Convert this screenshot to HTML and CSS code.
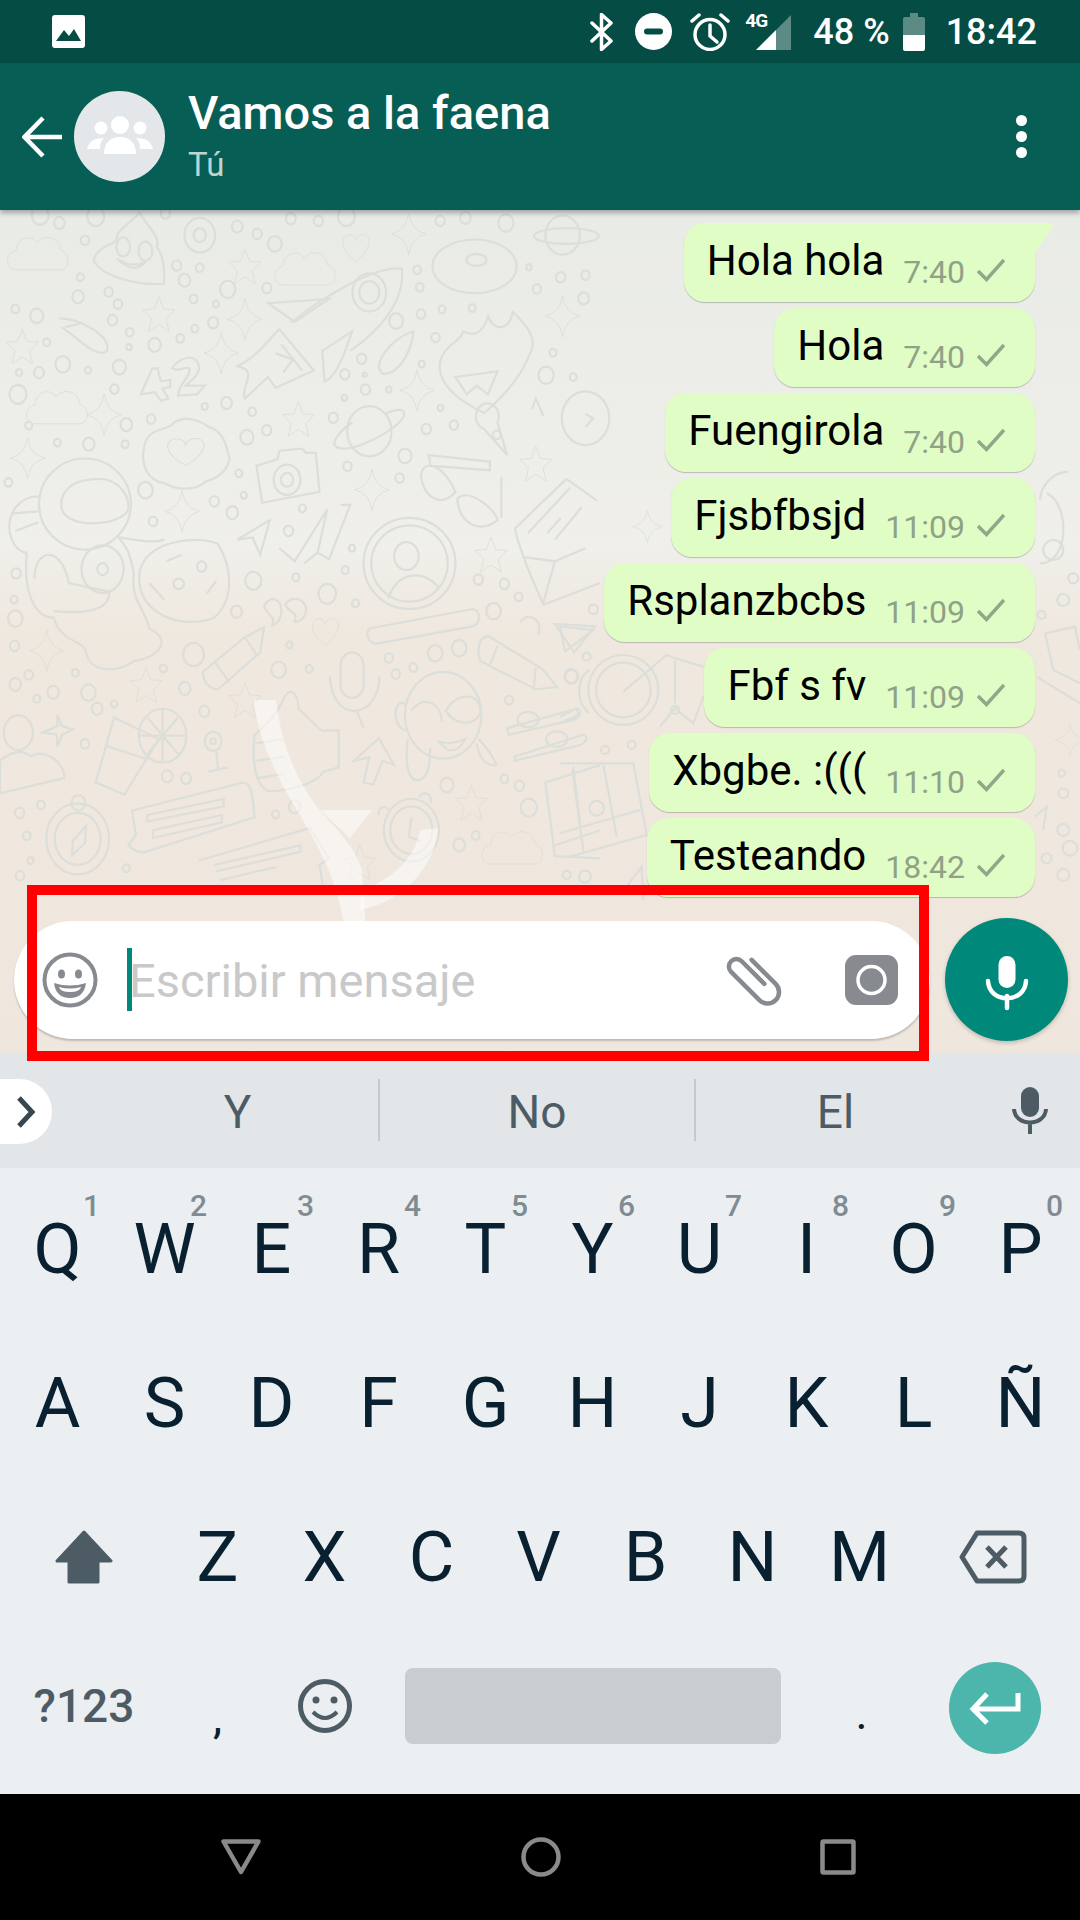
FILE: index.html
```html
<!DOCTYPE html>
<html lang="es">
<head>
  <meta charset="UTF-8">
  <meta name="viewport" content="width=device-width, initial-scale=1.0">
  <title>Vamos a la faena</title>
  <link rel="stylesheet" href="styles.css">
</head>
<body>
<div class="screen">

  <div class="statusbar">
    <svg class="st-photo" width="33" height="33" viewBox="0 0 33 33"><rect width="33" height="33" rx="3" fill="#fff"/><path d="M4 26 L12 15 L17 21 L22 14 L29 26Z" fill="#054d44"/></svg>
    <div class="st-right">
      <svg class="st-bt" width="23" height="38" viewBox="0 0 23 38"><path d="M2 10 L21 28 L11.5 36.5 V1.5 L21 10 L2 28" fill="none" stroke="#fff" stroke-width="3.5" stroke-linejoin="round" stroke-linecap="round"/></svg>
      <svg class="st-dnd" width="37" height="37" viewBox="0 0 37 37"><circle cx="18.5" cy="18.5" r="18.5" fill="#fff"/><rect x="9" y="15.5" width="19" height="6" rx="3" fill="#054d44"/></svg>
      <svg class="st-alarm" width="42" height="38" viewBox="0 0 42 38"><g fill="none" stroke="#fff" stroke-width="3.5" stroke-linecap="round"><circle cx="21" cy="21.5" r="15"/><path d="M21 12 V23 L28 29"/><path d="M3 8 L10 2 M39 8 L32 2"/></g></svg>
      <div class="st-signal">
        <span class="st-net">4G</span>
        <svg width="46" height="37" viewBox="0 0 46 37"><path d="M46 2 L11 37 H46Z" fill="#fff" opacity=".35"/><path d="M31 17 L11 37 H31Z" fill="#fff"/></svg>
      </div>
      <span class="st-text st-batt">48 %</span>
      <svg class="st-battery" width="22" height="38" viewBox="0 0 22 38"><path d="M7 0 H15 V4 H20 Q22 4 22 6 V22 H0 V6 Q0 4 2 4 H7Z" fill="#fff" opacity=".35"/><path d="M0 22 H22 V36 Q22 38 20 38 H2 Q0 38 0 36Z" fill="#fff"/></svg>
      <span class="st-text st-time">18:42</span>
    </div>
  </div>

  <div class="chat-header">
    <svg class="back" width="42" height="42" viewBox="0 0 42 42"><path d="M40 21 H4 M21 2 L2.5 21 L21 40" fill="none" stroke="#fff" stroke-width="4.5"/></svg>
    <div class="avatar">
      <svg width="91" height="91" viewBox="0 0 91 91" fill="#fff"><circle cx="46" cy="34" r="9"/><circle cx="27" cy="37" r="6.5"/><circle cx="66" cy="37" r="6.5"/><path d="M30 63 C30 52 36 46 46 46 C56 46 62 52 62 63Z"/><path d="M13 58 C15 50 21 47 30 47 C27 50 26 53 26 58Z M79 58 C77 50 71 47 62 47 C65 50 66 53 66 58Z"/></svg>
    </div>
    <div class="chat-info">
      <div class="chat-title">Vamos a la faena</div>
      <div class="chat-sub">Tú</div>
    </div>
    <div class="dots"><i></i><i></i><i></i></div>
  </div>

  <div class="chat">
    <svg class="doodle" viewBox="0 0 1080 843" preserveAspectRatio="none">
      <defs>
        <path id="star" d="M0 -40 L12 -12 L42 -10 L19 10 L27 40 L0 24 L-27 40 L-19 10 L-42 -10 L-12 -12Z"/>
        <path id="spark" d="M0 -48 Q6 -8 45 0 Q6 8 0 48 Q-6 8 -45 0 Q-6 -8 0 -48Z"/>
        <path id="cloud" d="M-58 38 C-88 38 -88 -2 -58 -6 C-58 -36 -18 -46 -4 -24 C16 -46 54 -38 58 -8 C84 -2 84 38 58 38Z"/>
        <path id="heart" d="M0 34 C-50 0 -36 -34 -10 -26 Q-2 -24 0 -14 Q4 -26 16 -28 C42 -30 44 4 0 34Z"/>
      </defs>
      <g class="ink" transform="scale(.3827 .4337)">
        <use href="#cloud" x="100" y="100"/><use href="#cloud" x="798" y="135"/><use href="#cloud" x="150" y="455"/>
        <use href="#cloud" x="1340" y="1470"/>
        <use href="#star" x="640" y="130"/><use href="#star" x="415" y="240"/><use href="#star" x="58" y="315"/>
        <use href="#star" x="780" y="482"/><use href="#star" x="1400" y="585"/><use href="#star" x="1283" y="795"/>
        <use href="#star" x="382" y="1095"/><use href="#star" x="640" y="1130"/><use href="#star" x="1232" y="1367"/>
        <use href="#star" x="940" y="1505"/>
        <use href="#spark" x="1068" y="55"/><use href="#spark" x="640" y="252"/><use href="#spark" x="1470" y="245"/>
        <use href="#spark" x="578" y="330"/><use href="#spark" x="1090" y="416"/><use href="#spark" x="272" y="472"/>
        <use href="#spark" x="72" y="572"/><use href="#spark" x="972" y="645"/><use href="#spark" x="476" y="695"/>
        <use href="#spark" x="122" y="1016"/>
        <use href="#heart" x="930" y="85"/><use href="#heart" x="850" y="970"/>

        <!-- poop -->
        <path d="M245 115 C250 90 290 80 305 70 C300 45 340 35 365 5 C385 40 420 60 410 85 C430 110 430 150 428 170 C350 175 260 150 245 115Z"/>
        <ellipse cx="322" cy="85" rx="18" ry="22"/><ellipse cx="380" cy="95" rx="18" ry="22"/>
        <path d="M305 112 Q345 135 380 120 Q350 150 305 112Z"/>
        <!-- gear -->
        <circle cx="522" cy="58" r="40"/><circle cx="522" cy="58" r="16"/>
        <!-- donut -->
        <ellipse cx="1240" cy="130" rx="110" ry="62"/><ellipse cx="1245" cy="115" rx="26" ry="14"/>
        <!-- saturn top -->
        <circle cx="1470" cy="58" r="45"/><ellipse cx="1480" cy="60" rx="85" ry="18"/>
        <!-- rocket -->
        <path d="M760 260 C860 190 980 130 1050 135 C1060 210 990 280 915 325"/>
        <circle cx="965" cy="190" r="44"/><circle cx="965" cy="190" r="26"/>
        <path d="M700 215 L860 205 L770 258Z"/>
        <path d="M920 280 L842 325 L848 395 Q880 390 920 280Z"/>
        <path d="M730 275 L820 370 L720 410 L700 385 L640 435 C625 410 680 370 620 360 C670 340 700 300 730 275Z"/>
        <path d="M720 330 L765 345 L740 375 M735 310 L790 370"/>
        <!-- comets -->
        <path d="M155 250 C210 250 290 290 280 325 C250 345 200 290 160 270 M170 270 L210 262"/>
        <path d="M990 365 C990 330 1040 290 1080 280 C1075 330 1040 380 1000 378Z"/>
        <!-- 42 -->
        <path d="M368 425 L398 365 L412 365 L420 395 L445 392 L445 408 L425 412 L440 435 L420 440 L405 420Z"/>
        <path d="M450 365 C470 335 520 330 520 365 C520 385 490 400 485 405 L535 405 L515 425 L465 428 C470 395 500 385 495 365 C480 360 465 375 450 365Z"/>
        <!-- flame heart -->
        <path d="M1150 350 C1160 310 1210 300 1210 280 C1235 290 1260 290 1275 245 C1290 280 1330 280 1340 235 C1370 260 1400 290 1390 320 C1370 370 1330 420 1265 468 C1200 440 1140 400 1150 350Z"/>
        <path d="M1190 385 L1300 372 L1275 425 L1245 405 L1220 425Z"/>
        <!-- heart cloud -->
        <path d="M380 535 C395 500 440 510 455 490 C485 470 530 490 545 500 C590 510 595 560 600 575 C590 610 560 620 540 625 C510 650 460 645 430 630 C390 625 360 590 380 535Z"/>
        <use href="#heart" transform="translate(485 555) scale(1.4 1)"/>
        <!-- planet -->
        <circle cx="965" cy="510" r="58"/><path d="M920 490 C880 515 850 550 900 550 C950 550 1070 490 1055 465 C1045 455 1020 465 1005 470"/>
        <!-- camera -->
        <path d="M670 590 L725 575 L730 555 L790 550 L800 560 L825 560 L835 650 L685 675Z"/>
        <circle cx="750" cy="622" r="35"/><circle cx="750" cy="622" r="16"/>
        <!-- glasses -->
        <path d="M1100 610 C1110 570 1160 590 1190 650 C1150 690 1105 660 1100 610Z M1195 665 C1225 640 1295 690 1300 715 C1260 745 1200 730 1195 665Z M1120 565 L1280 580 L1280 600 L1125 590Z M1310 615 L1310 710"/>
        <path d="M1300 490 a30 30 0 1 0 -35 15 L1325 565Z"/><circle cx="1298" cy="518" r="10"/>
        <!-- astronaut -->
        <ellipse cx="222" cy="678" rx="120" ry="105"/>
        <path d="M160 680 C160 640 200 620 260 620 C310 620 340 660 335 690 C320 730 160 740 160 680Z"/>
        <path d="M100 660 C50 660 20 700 25 740 C30 770 50 790 70 790 M100 695 L28 700 M100 720 L40 740"/>
        <path d="M70 790 C60 880 90 940 140 940 C160 1000 220 990 225 1020 C235 1065 300 1070 350 1040 C420 1030 450 990 390 965 C380 920 340 900 350 840 C340 790 330 775 310 755 C350 760 400 770 430 760"/>
        <path d="M90 850 C90 780 160 770 180 860 L285 880 C290 930 200 930 140 925"/>
        <circle cx="268" cy="828" r="55"/><circle cx="268" cy="828" r="14"/>
        <path d="M370 820 C400 760 520 750 570 770 C610 830 610 900 560 940 C500 960 420 950 380 900 C360 870 360 840 370 820Z"/>
        <ellipse cx="467" cy="862" rx="14" ry="12"/><ellipse cx="527" cy="822" rx="12" ry="12"/><path d="M390 860 L430 900 M435 810 L475 795 M540 885 L565 855"/>
        <!-- paper plane and ticks -->
        <path d="M620 760 L705 715 L680 795 L660 755Z"/>
        <path d="M730 780 L770 810 L855 690 L830 790 L860 805 L915 680 L890 680 M795 815 L830 790"/>
        <!-- profile ring -->
        <ellipse cx="1070" cy="815" rx="120" ry="105"/><ellipse cx="1070" cy="815" rx="100" ry="88"/>
        <circle cx="1062" cy="798" r="32"/><path d="M1015 895 C1040 830 1110 830 1145 870"/>
        <!-- envelope -->
        <path d="M1345 735 L1480 620 L1560 670 M1345 735 C1360 790 1390 850 1420 910 L1568 860 M1380 745 L1490 640 M1365 800 L1450 810 L1420 905 M1450 810 L1530 780 M1430 745 L1465 710 M1450 760 L1520 685"/>
        <!-- quotes -->
        <path d="M690 915 C700 890 735 890 735 925 C735 945 720 955 712 958 C720 935 700 935 690 915Z M745 910 C755 890 800 890 800 925 C795 945 780 950 770 950 C780 925 755 930 745 910Z"/>
        <!-- flute -->
        <path d="M965 965 L1235 920 C1260 925 1255 955 1235 960 L985 1000 C960 1000 955 975 965 965Z"/>
        <!-- pencils -->
        <path d="M530 1065 L640 985 L690 962 L680 1020 L570 1105 C545 1105 530 1085 530 1065Z M560 1040 L600 1090 M640 985 L670 1025"/>
        <path d="M1250 1020 C1250 995 1260 985 1275 982 L1420 1060 L1455 1100 L1400 1105 L1255 1040Z M1300 1005 L1280 1050 M1400 1055 L1395 1100"/>
        <!-- mic -->
        <rect x="890" y="1020" width="60" height="105" rx="30"/><path d="M862 1075 C865 1125 890 1155 925 1155 C965 1155 990 1120 992 1075 M932 1155 L950 1195"/>
        <!-- thumb -->
        <path d="M740 1130 C760 1090 780 1120 780 1150 C810 1170 840 1210 850 1200 L885 1200 L885 1285 L845 1295 C830 1320 760 1340 700 1340 C660 1320 660 1260 665 1210 C690 1190 720 1170 740 1130Z"/>
        <path d="M670 1230 L740 1220 M670 1270 L745 1260 M675 1310 L740 1300"/>
        <!-- arrow -->
        <path d="M925 1270 L990 1218 L1030 1280 L1000 1270 L975 1325 L950 1320 L965 1262Z"/>
        <!-- girl -->
        <circle cx="1158" cy="1165" r="100"/>
        <path d="M1060 1140 C1030 1120 1020 1190 1060 1200 M1065 1220 C1060 1260 1060 1320 1095 1315 C1130 1300 1120 1260 1125 1240 M1250 1220 C1275 1240 1310 1290 1290 1280 C1260 1280 1250 1250 1245 1230"/>
        <path d="M1075 1155 C1100 1120 1150 1130 1155 1180 M1165 1155 C1190 1110 1260 1110 1255 1160 C1240 1190 1190 1190 1165 1155Z"/>
        <path d="M1145 1225 Q1180 1235 1215 1220 Q1200 1250 1170 1245Z"/>
        <!-- sliders -->
        <path d="M1325 1195 L1505 1150 C1525 1150 1515 1170 1500 1175 L1330 1210Z M1345 1260 L1525 1210 C1540 1215 1530 1230 1510 1235 L1345 1270Z"/>
        <ellipse cx="1380" cy="1175" rx="28" ry="18"/><ellipse cx="1455" cy="1220" rx="28" ry="18"/>
        <!-- glass -->
        <path d="M298 1170 L415 1220 L325 1348 L250 1320Z M275 1235 L380 1265"/>
        <circle cx="425" cy="1212" r="62"/><path d="M425 1150 V1272 M365 1212 H485 M385 1170 L465 1254 M465 1170 L385 1254"/>
        <circle cx="557" cy="1225" r="22"/><circle cx="557" cy="1225" r="7"/><path d="M565 1248 L570 1290 L545 1295 L595 1285"/>
        <!-- person -->
        <ellipse cx="48" cy="1205" rx="38" ry="40"/><path d="M0 1345 L0 1270 C40 1240 70 1250 80 1260 C110 1240 170 1270 168 1310Z"/>
        <path d="M150 1165 L150 1190 L112 1205 L148 1210 L150 1238 L162 1210 L190 1198 L162 1190Z"/>
        <!-- bubbles -->
        <path d="M345 1385 L635 1320 C650 1320 660 1330 665 1400 L380 1480 C365 1485 350 1475 335 1465 L355 1440Z M385 1395 L585 1358 L585 1375 L385 1410Z M400 1430 L580 1395 L580 1412 L400 1448Z"/>
        <path d="M520 1500 L810 1425 L860 1495 L835 1510 L845 1568 M560 1510 L785 1465 L785 1480 L565 1525 M575 1545 L720 1515"/>
        <!-- compass -->
        <circle cx="203" cy="1450" r="82"/><circle cx="203" cy="1450" r="60"/><circle cx="205" cy="1367" r="18"/><path d="M225 1420 L190 1455 L188 1488 L222 1460Z"/>
        <!-- clock -->
        <circle cx="1075" cy="1430" r="72"/><circle cx="1075" cy="1430" r="55"/><path d="M1075 1400 L1068 1445 L1100 1455"/>
        <path d="M990 1395 a14 14 0 0 1 25 -12 M1095 1355 a14 14 0 0 1 30 12"/>
        <!-- map -->
        <path d="M1425 1320 L1568 1280 M1425 1320 L1450 1490 L1568 1495 M1495 1290 L1525 1480 M1450 1465 L1568 1430"/>
        <!-- right edge -->
        <circle cx="1530" cy="480" r="62"/><path d="M1530 470 L1550 480 L1530 500 M1390 460 L1400 435 L1420 475"/>
        <path d="M1360 950 a25 25 0 0 1 45 30 M1450 955 L1555 960 L1500 1020Z"/>
        <path d="M1540 1060 a60 60 0 0 0 0 100"/>
      </g>
      <g class="ink" transform="scale(.3827 .4337)">
        <circle cx="105" cy="12" r="22"/><circle cx="250" cy="15" r="22"/><circle cx="432" cy="8" r="12"/><circle cx="155" cy="30" r="14"/><circle cx="222" cy="70" r="11"/>
        <circle cx="620" cy="38" r="14"/><circle cx="672" cy="55" r="12"/><circle cx="718" cy="78" r="18"/><circle cx="760" cy="20" r="13"/><circle cx="832" cy="25" r="12"/><circle cx="905" cy="15" r="22"/>
        <circle cx="1322" cy="30" r="20"/><circle cx="1216" cy="18" r="14"/><circle cx="1150" cy="25" r="12"/>
        <circle cx="462" cy="128" r="12"/><circle cx="522" cy="133" r="10"/><circle cx="482" cy="162" r="15"/><circle cx="595" cy="183" r="20"/><circle cx="697" cy="180" r="12"/><circle cx="210" cy="155" r="9"/><circle cx="284" cy="189" r="11"/><circle cx="204" cy="200" r="15"/>
        <circle cx="1090" cy="138" r="10"/><circle cx="1097" cy="178" r="10"/><circle cx="1465" cy="155" r="12"/><circle cx="1530" cy="150" r="11"/><circle cx="1403" cy="182" r="11"/><circle cx="1525" cy="204" r="14"/><circle cx="1382" cy="132" r="7"/>
        <circle cx="40" cy="228" r="10"/><circle cx="96" cy="244" r="17"/><circle cx="308" cy="217" r="11"/><circle cx="506" cy="205" r="10"/><circle cx="564" cy="217" r="8"/><circle cx="294" cy="254" r="12"/><circle cx="557" cy="260" r="13"/><circle cx="509" cy="273" r="9"/><circle cx="339" cy="282" r="10"/><circle cx="471" cy="296" r="10"/><circle cx="404" cy="311" r="16"/><circle cx="337" cy="316" r="7"/><circle cx="122" cy="305" r="9"/>
        <circle cx="1035" cy="256" r="18"/><circle cx="1100" cy="240" r="11"/><circle cx="1155" cy="229" r="9"/><circle cx="1234" cy="226" r="9"/><circle cx="1138" cy="294" r="11"/><circle cx="945" cy="343" r="12"/><circle cx="1102" cy="355" r="8"/><circle cx="901" cy="379" r="12"/><circle cx="953" cy="380" r="5"/><circle cx="955" cy="414" r="12"/><circle cx="1016" cy="414" r="7"/><circle cx="900" cy="433" r="7"/><circle cx="1445" cy="329" r="9"/><circle cx="1427" cy="381" r="20"/><circle cx="1498" cy="385" r="9"/>
        <circle cx="164" cy="356" r="19"/><circle cx="230" cy="369" r="8"/><circle cx="312" cy="362" r="17"/><circle cx="102" cy="375" r="13"/><circle cx="50" cy="375" r="8"/><circle cx="47" cy="425" r="22"/><circle cx="299" cy="413" r="11"/>
        <circle cx="592" cy="445" r="14"/><circle cx="535" cy="453" r="8"/><circle cx="659" cy="465" r="10"/><circle cx="395" cy="482" r="11"/><circle cx="330" cy="495" r="15"/><circle cx="75" cy="497" r="9"/><circle cx="150" cy="536" r="9"/><circle cx="232" cy="540" r="15"/><circle cx="327" cy="540" r="9"/><circle cx="645" cy="524" r="17"/><circle cx="697" cy="508" r="12"/><circle cx="871" cy="479" r="12"/><circle cx="1151" cy="456" r="7"/><circle cx="1114" cy="505" r="12"/><circle cx="1186" cy="496" r="11"/>
        <circle cx="22" cy="628" r="10"/><circle cx="380" cy="646" r="19"/><circle cx="624" cy="607" r="9"/><circle cx="637" cy="658" r="8"/><circle cx="560" cy="672" r="12"/><circle cx="607" cy="698" r="15"/><circle cx="400" cy="718" r="11"/><circle cx="908" cy="591" r="11"/><circle cx="1058" cy="567" r="17"/><circle cx="1044" cy="618" r="11"/><circle cx="790" cy="688" r="9"/><circle cx="754" cy="740" r="12"/><circle cx="920" cy="780" r="8"/><circle cx="902" cy="830" r="9"/>
        <circle cx="42" cy="838" r="12"/><circle cx="662" cy="855" r="21"/><circle cx="773" cy="847" r="9"/><circle cx="855" cy="885" r="23"/><circle cx="929" cy="907" r="9"/><circle cx="1250" cy="852" r="12"/><circle cx="1318" cy="862" r="12"/><circle cx="1355" cy="892" r="10"/><circle cx="1290" cy="925" r="19"/><circle cx="37" cy="898" r="9"/><circle cx="40" cy="942" r="19"/><circle cx="618" cy="926" r="14"/>
        <circle cx="38" cy="1005" r="12"/><circle cx="506" cy="1025" r="27"/><circle cx="756" cy="1003" r="8"/><circle cx="1016" cy="1033" r="11"/><circle cx="1137" cy="1022" r="19"/><circle cx="1200" cy="1010" r="19"/><circle cx="1034" cy="1070" r="11"/><circle cx="1080" cy="1055" r="10"/><circle cx="728" cy="1060" r="19"/><circle cx="808" cy="1058" r="9"/><circle cx="427" cy="1057" r="9"/><circle cx="1492" cy="1075" r="17"/>
        <circle cx="75" cy="1072" r="11"/><circle cx="40" cy="1094" r="15"/><circle cx="197" cy="1067" r="9"/><circle cx="139" cy="1112" r="15"/><circle cx="96" cy="1127" r="9"/><circle cx="231" cy="1113" r="19"/><circle cx="483" cy="1103" r="15"/><circle cx="298" cy="1139" r="8"/><circle cx="254" cy="1150" r="14"/><circle cx="534" cy="1156" r="13"/><circle cx="1330" cy="1130" r="10"/>
        <circle cx="222" cy="1231" r="11"/><circle cx="1318" cy="1312" r="10"/><circle cx="1168" cy="1326" r="17"/><circle cx="1357" cy="1328" r="12"/><circle cx="437" cy="1306" r="14"/><circle cx="486" cy="1311" r="13"/><circle cx="51" cy="1390" r="12"/><circle cx="107" cy="1372" r="10"/><circle cx="70" cy="1443" r="10"/><circle cx="720" cy="1393" r="9"/><circle cx="770" cy="1376" r="15"/><circle cx="1382" cy="1378" r="21"/><circle cx="1243" cy="1442" r="10"/><circle cx="1200" cy="1464" r="15"/><circle cx="80" cy="1500" r="8"/><circle cx="52" cy="1535" r="11"/><circle cx="330" cy="1518" r="9"/>
      </g>
      <g class="ink" transform="translate(560 260) scale(.3333)">
        <use href="#spark" x="262" y="170"/><circle cx="35" cy="620" r="20"/><circle cx="190" cy="660" r="105"/><circle cx="190" cy="660" r="82"/>
        <path d="M190 665 L320 555 L345 565 L430 590 M345 570 L345 700 M300 770 L345 715 L400 760 L430 680"/><circle cx="345" cy="720" r="12"/>
        <path d="M0 470 L100 480 L15 545Z M0 740 L50 715 L55 735 L0 760"/><circle cx="100" cy="418" r="14"/><circle cx="80" cy="560" r="12"/><circle cx="135" cy="840" r="12"/><circle cx="215" cy="825" r="12"/>
        <path d="M0 880 L220 880 L260 1095 L30 1160 M40 890 L60 1060 M130 885 L170 1100 M0 1090 L240 1020"/><circle cx="110" cy="1015" r="22"/>
        <path d="M1440 90 a90 90 0 0 1 85 -85 M1460 70 C1530 100 1530 280 1440 280"/><circle cx="1480" cy="240" r="30"/><circle cx="1540" cy="325" r="15"/><circle cx="1510" cy="390" r="18"/><circle cx="1445" cy="435" r="12"/>
        <path d="M1455 490 L1545 470 L1560 540 M1455 490 L1480 600 L1560 640 M1430 620 L1560 700"/>
        <use href="#spark" x="1530" y="810"/><circle cx="1505" cy="910" r="10"/><circle cx="1510" cy="970" r="15"/><path d="M1425 1040 L1460 1010 L1450 1080"/><circle cx="1510" cy="1080" r="18"/><circle cx="1530" cy="1135" r="22"/><circle cx="1460" cy="1165" r="15"/><circle cx="1510" cy="1215" r="18"/><circle cx="75" cy="1220" r="18"/><circle cx="20" cy="1215" r="12"/>
        <path d="M200 1250 L245 1190 L250 1290"/>
      </g>
      <path class="wave" d="M254 490 L276 490 C282 540 300 580 330 612 C345 628 355 640 362 660 L366 720 L345 720 C335 650 300 610 280 570 C265 540 256 515 254 490Z"/>
      <path class="wave" d="M438 618 C436 650 410 690 360 700 L362 680 C390 670 415 650 420 620Z"/>
      <path class="wave" d="M320 600 L372 600 L350 628Z"/>
    </svg>

    <div class="messages">
      <div class="msg msg-first"><span class="msg-text">Hola hola</span><span class="msg-time">7:40</span><svg class="tick" width="28" height="24" viewBox="0 0 28 24"><path d="M1 13 L9.5 21.5 L27 2"/></svg></div>
      <div class="msg"><span class="msg-text">Hola</span><span class="msg-time">7:40</span><svg class="tick" width="28" height="24" viewBox="0 0 28 24"><path d="M1 13 L9.5 21.5 L27 2"/></svg></div>
      <div class="msg"><span class="msg-text">Fuengirola</span><span class="msg-time">7:40</span><svg class="tick" width="28" height="24" viewBox="0 0 28 24"><path d="M1 13 L9.5 21.5 L27 2"/></svg></div>
      <div class="msg"><span class="msg-text">Fjsbfbsjd</span><span class="msg-time">11:09</span><svg class="tick" width="28" height="24" viewBox="0 0 28 24"><path d="M1 13 L9.5 21.5 L27 2"/></svg></div>
      <div class="msg"><span class="msg-text">Rsplanzbcbs</span><span class="msg-time">11:09</span><svg class="tick" width="28" height="24" viewBox="0 0 28 24"><path d="M1 13 L9.5 21.5 L27 2"/></svg></div>
      <div class="msg"><span class="msg-text">Fbf s fv</span><span class="msg-time">11:09</span><svg class="tick" width="28" height="24" viewBox="0 0 28 24"><path d="M1 13 L9.5 21.5 L27 2"/></svg></div>
      <div class="msg"><span class="msg-text">Xbgbe. :(((</span><span class="msg-time">11:10</span><svg class="tick" width="28" height="24" viewBox="0 0 28 24"><path d="M1 13 L9.5 21.5 L27 2"/></svg></div>
      <div class="msg"><span class="msg-text">Testeando</span><span class="msg-time">18:42</span><svg class="tick" width="28" height="24" viewBox="0 0 28 24"><path d="M1 13 L9.5 21.5 L27 2"/></svg></div>
    </div>

    <div class="composer">
      <div class="input-pill">
        <svg class="smiley" width="56" height="56" viewBox="0 0 56 56"><circle cx="28" cy="28" r="25.5" fill="none" stroke="#878b90" stroke-width="4"/><ellipse cx="19.5" cy="22" rx="3.5" ry="4.5" fill="#878b90"/><ellipse cx="36.5" cy="22" rx="3.5" ry="4.5" fill="#878b90"/><path d="M12 31 Q28 36 44 31 Q42 46 28 46 Q14 46 12 31Z" fill="#878b90"/><path d="M17 35 Q28 38 39 35 Q38 40 28 40 Q18 40 17 35Z" fill="#fff"/></svg>
        <span class="caret"></span>
        <span class="placeholder">Escribir mensaje</span>
        <svg class="clip" width="55" height="48" viewBox="0 0 55 48"><g transform="rotate(-45 27.5 24)"><path d="M39 7 V41 a11.5 11.5 0 0 1 -23 0 V1 a7.5 7.5 0 0 1 15 0 V33" fill="none" stroke="#878b90" stroke-width="4.5" stroke-linecap="round"/></g></svg>
        <svg class="camera" width="53" height="50" viewBox="0 0 53 50"><rect width="53" height="50" rx="11" fill="#878b90"/><circle cx="26.5" cy="25" r="13.5" fill="none" stroke="#fff" stroke-width="3.5"/></svg>
      </div>
      <div class="fab">
        <svg width="44" height="56" viewBox="0 0 44 56"><rect x="13.5" y="0" width="17" height="32" rx="8.5" fill="#fff"/><path d="M3 25 C4 48 40 48 41 25 M22 40 V52" fill="none" stroke="#fff" stroke-width="4.5" stroke-linecap="round"/></svg>
      </div>
    </div>
  </div>

  <div class="suggestions">
    <div class="sug-toggle"><svg width="22" height="34" viewBox="0 0 22 34"><path d="M4 3 L17 17 L4 31" fill="none" stroke="#37474f" stroke-width="5"/></svg></div>
    <div class="sug sug-a">Y</div>
    <div class="sug sug-b">No</div>
    <div class="sug sug-c">El</div>
    <svg class="sug-mic" width="36" height="48" viewBox="0 0 36 48"><rect x="9" y="0" width="18" height="30" rx="9" fill="#4d5c64"/><path d="M2 22 C3 40 33 40 34 22 M18 36 V47" fill="none" stroke="#4d5c64" stroke-width="4"/></svg>
  </div>

  <div class="keyboard">
    <div class="kb-row">
      <div class="key"><sup>1</sup>Q</div><div class="key"><sup>2</sup>W</div><div class="key"><sup>3</sup>E</div><div class="key"><sup>4</sup>R</div><div class="key"><sup>5</sup>T</div><div class="key"><sup>6</sup>Y</div><div class="key"><sup>7</sup>U</div><div class="key"><sup>8</sup>I</div><div class="key"><sup>9</sup>O</div><div class="key"><sup>0</sup>P</div>
    </div>
    <div class="kb-row">
      <div class="key">A</div><div class="key">S</div><div class="key">D</div><div class="key">F</div><div class="key">G</div><div class="key">H</div><div class="key">J</div><div class="key">K</div><div class="key">L</div><div class="key">Ñ</div>
    </div>
    <div class="kb-row">
      <div class="key key-wide"><svg width="58" height="54" viewBox="0 0 58 54"><path d="M29 2 L56 31 H43 V52 H14 V31 H2Z" fill="#4d5c64" stroke="#4d5c64" stroke-width="3" stroke-linejoin="round"/></svg></div>
      <div class="key">Z</div><div class="key">X</div><div class="key">C</div><div class="key">V</div><div class="key">B</div><div class="key">N</div><div class="key">M</div>
      <div class="key key-wide"><svg width="68" height="54" viewBox="0 0 68 54"><path d="M18 3 H60 Q65 3 65 8 V46 Q65 51 60 51 H18 L3 27Z" fill="none" stroke="#4d5c64" stroke-width="5" stroke-linejoin="round"/><path d="M28 17 L47 37 M47 17 L28 37" stroke="#4d5c64" stroke-width="5"/></svg></div>
    </div>
    <div class="kb-row kb-row-last">
      <div class="key key-wide key-sym">?123</div>
      <div class="key key-punct key-comma">,</div>
      <div class="key"><svg width="54" height="54" viewBox="0 0 54 54"><circle cx="27" cy="27" r="24.5" fill="none" stroke="#4d5c64" stroke-width="5"/><circle cx="18" cy="21" r="3.5" fill="#4d5c64"/><circle cx="36" cy="21" r="3.5" fill="#4d5c64"/><path d="M15 33 Q27 45 39 33" fill="none" stroke="#4d5c64" stroke-width="4"/></svg></div>
      <div class="key key-space"><span></span></div>
      <div class="key key-punct">.</div>
      <div class="key key-wide"><div class="enter"><svg width="52" height="34" viewBox="0 0 52 34"><path d="M49 2 V18 H5 M18 3 L4 18 L18 32" fill="none" stroke="#fff" stroke-width="5"/></svg></div></div>
    </div>
  </div>

  <div class="navbar">
    <svg width="40" height="36" viewBox="0 0 40 36"><path d="M2.5 2.5 H37.5 L20 33Z" fill="none" stroke="#8a8a8a" stroke-width="4.5" stroke-linejoin="round"/></svg>
    <svg width="40" height="40" viewBox="0 0 40 40"><circle cx="20" cy="20" r="17.5" fill="none" stroke="#8a8a8a" stroke-width="4.5"/></svg>
    <svg width="36" height="36" viewBox="0 0 36 36"><rect x="2.5" y="2.5" width="31" height="31" rx="1" fill="none" stroke="#8a8a8a" stroke-width="4.5"/></svg>
  </div>

  <div class="annotation"></div>
</div>
</body>
</html>
```
FILE: styles.css
```css
* {
  box-sizing: border-box;
}

body {
  margin: 0;
  background: #000;
  font-family: Roboto, "Liberation Sans", sans-serif;
}

.screen {
  position: relative;
  width: 1080px;
  height: 1920px;
  display: flex;
  flex-direction: column;
  overflow: hidden;
}

/* status bar */
.statusbar {
  height: 63px;
  flex: none;
  display: flex;
  align-items: center;
  padding: 0 43px 0 52px;
  background: #054d44;
  color: #fff;
}

.st-right {
  margin-left: auto;
  display: flex;
  align-items: center;
}

.st-dnd { margin-left: 22px; }
.st-alarm { margin-left: 17px; }
.st-battery { margin-left: 13px; }

.st-signal {
  position: relative;
  margin-left: 14px;
  height: 37px;
}

.st-signal svg {
  display: block;
}

.st-net {
  position: absolute;
  top: -2px;
  left: 0;
  font-size: 19px;
  font-weight: 700;
  line-height: 20px;
  letter-spacing: -1px;
}

.st-text {
  font-size: 36px;
  font-weight: 500;
  line-height: 40px;
}

.st-batt { margin-left: 22px; }
.st-time { margin-left: 21px; }

/* header */
.chat-header {
  position: relative;
  z-index: 2;
  height: 147px;
  flex: none;
  display: flex;
  align-items: center;
  padding: 0 22px;
  background: #075e54;
  box-shadow: 0 3px 5px rgba(0, 0, 0, .3);
  color: #fff;
}

.back {
  flex: none;
  margin-top: 1px;
}

.avatar {
  width: 91px;
  height: 91px;
  flex: none;
  margin: 0 23px 0 10px;
  border-radius: 50%;
  background: #e3e7ea;
}

.avatar svg {
  display: block;
}

.chat-title {
  font-size: 47px;
  font-weight: 500;
  line-height: 54px;
  margin-top: -2px;
}

.chat-sub {
  margin-top: 5px;
  font-size: 33px;
  line-height: 40px;
  color: #bcd5d0;
}

.dots {
  margin-left: auto;
  margin-right: 31px;
  display: flex;
  flex-direction: column;
  gap: 5px;
}

.dots i {
  display: block;
  width: 11px;
  height: 11px;
  border-radius: 50%;
  background: #fff;
}

/* chat */
.chat {
  position: relative;
  height: 843px;
  flex: none;
  display: flex;
  flex-direction: column;
  justify-content: space-between;
  background: linear-gradient(to bottom, #e9ebe7 0%, #f0efea 40%, #efe8df 50%, #efe7de 100%);
}

.doodle {
  position: absolute;
  top: 0;
  left: 0;
  width: 1080px;
  height: 843px;
}

.ink * {
  fill: none;
  stroke: #dcdeda;
  stroke-width: 2.2px;
  vector-effect: non-scaling-stroke;
}

.wave {
  fill: rgba(255, 255, 255, .5);
}

.messages {
  position: relative;
  display: flex;
  flex-direction: column;
  align-items: flex-end;
  gap: 6px;
  padding: 13px 45px 0 0;
}

.msg {
  position: relative;
  height: 79px;
  display: flex;
  align-items: flex-start;
  padding: 0 30px 0 23px;
  border-radius: 21px;
  background: #e1fdc6;
  box-shadow: 0 1px 1px rgba(0, 0, 0, .22);
}

.msg-first {
  border-top-right-radius: 0;
}

.msg-first::after {
  content: "";
  position: absolute;
  top: 0;
  left: 100%;
  width: 18px;
  height: 30px;
  background: #e1fdc6;
  clip-path: polygon(0 0, 90% 0, 100% 10%, 0 100%);
}

.msg-text {
  margin-top: 13px;
  font-size: 42px;
  line-height: 50px;
  color: #000;
  white-space: nowrap;
}

.msg-time {
  margin: 30px 0 0 19px;
  font-size: 32px;
  line-height: 38px;
  color: #8fa286;
}

.tick {
  margin: 35px 0 0 12px;
}

.tick path {
  fill: none;
  stroke: #92a78a;
  stroke-width: 3.5px;
}

/* composer */
.composer {
  position: relative;
  display: flex;
  align-items: center;
  justify-content: space-between;
  padding: 0 12px 12px 14px;
}

.input-pill {
  width: 916px;
  height: 118px;
  display: flex;
  align-items: center;
  padding: 0 32px 0 28px;
  border-radius: 59px;
  background: #fff;
  box-shadow: 0 2px 2px rgba(0, 0, 0, .2);
}

.caret {
  width: 5px;
  height: 63px;
  margin: 0 -3px 0 29px;
  background: #00897b;
}

.placeholder {
  margin-top: 3px;
  font-size: 47px;
  line-height: 54px;
  color: #c9c9c9;
}

.clip {
  margin-left: auto;
  overflow: visible;
}

.camera {
  margin-left: 62px;
}

.fab {
  width: 123px;
  height: 123px;
  display: flex;
  align-items: center;
  justify-content: center;
  border-radius: 50%;
  background: #00897a;
  box-shadow: 0 2px 4px rgba(0, 0, 0, .2);
}

.fab svg {
  margin-top: 8px;
}

/* suggestions */
.suggestions {
  height: 115px;
  flex: none;
  display: flex;
  align-items: flex-start;
  padding-top: 26px;
  background: #e2e6e9;
}

.sug-toggle {
  width: 52px;
  height: 65px;
  display: flex;
  align-items: center;
  justify-content: flex-start;
  padding-left: 15px;
  border-radius: 0 33px 33px 0;
  background: #fff;
}

.sug {
  height: 62px;
  font-size: 46px;
  line-height: 66px;
  text-align: center;
  color: #4d5c64;
}

.sug-a {
  width: 283px;
  margin-left: 45px;
  border-right: 2px solid #c4c9cc;
}

.sug-b {
  width: 316px;
  border-right: 2px solid #c4c9cc;
}

.sug-c {
  width: 279px;
}

.sug-mic {
  margin: 8px 0 0 37px;
}

/* keyboard */
.keyboard {
  height: 626px;
  flex: none;
  display: flex;
  flex-direction: column;
  padding: 4px 5px 6px 4px;
  background: #ebeff2;
}

.kb-row {
  height: 154px;
  flex: none;
  display: flex;
}

.key {
  position: relative;
  width: 107px;
  flex: none;
  display: flex;
  align-items: center;
  justify-content: center;
  font-size: 70px;
  color: #082030;
}

.key sup {
  position: absolute;
  top: 16px;
  left: 79px;
  font-size: 30px;
  font-weight: 500;
  line-height: 36px;
  color: #7f8c93;
}

.key-wide {
  width: 160px;
}

.kb-row-last {
  padding-bottom: 10px;
}

.key-sym {
  font-size: 46px;
  font-weight: 500;
  color: #4d5c64;
}

.key-punct {
  padding-top: 14px;
  font-size: 46px;
}

.key-comma {
  padding-top: 22px;
}

.key-space {
  width: 430px;
  padding: 0 27px;
}

.key-space span {
  display: block;
  width: 100%;
  height: 76px;
  border-radius: 8px;
  background: #c8cdd0;
}

.enter {
  width: 92px;
  height: 92px;
  display: flex;
  align-items: center;
  justify-content: center;
  margin-top: 4px;
  border-radius: 50%;
  background: #4db6ac;
}

/* nav */
.navbar {
  height: 126px;
  flex: none;
  display: flex;
  align-items: center;
  justify-content: space-between;
  padding: 0 224px 0 221px;
  background: #000;
}

.annotation {
  position: absolute;
  top: 885px;
  left: 27px;
  width: 902px;
  height: 176px;
  border: 10px solid #f00;
}
```
